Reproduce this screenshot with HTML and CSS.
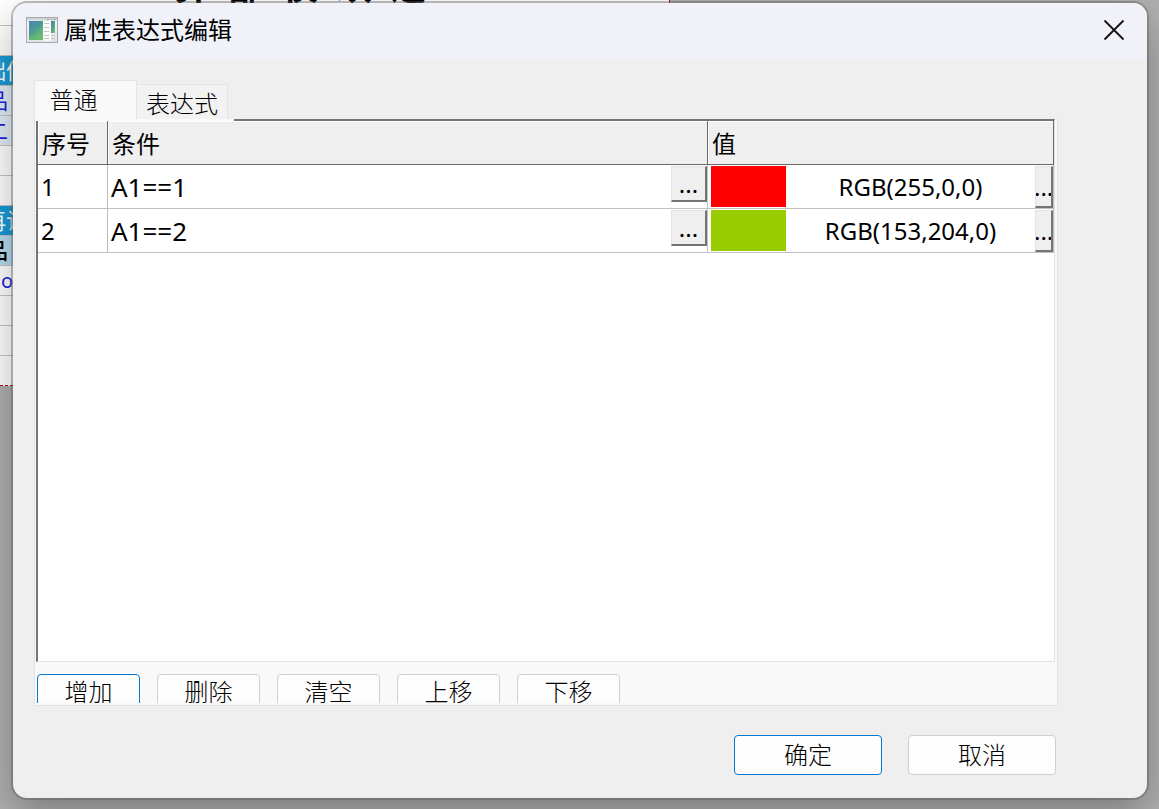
FILE: index.html
```html
<!DOCTYPE html>
<html lang="zh-CN">
<head>
<meta charset="utf-8">
<title>属性表达式编辑</title>
<link rel="stylesheet" href="styles.css">
</head>
<body>
<div class="sheet" aria-hidden="true">
  <div class="sheet-title"><span>算</span><span>部</span><span>仅</span><span>欢</span><span>之</span></div>
  <div class="sheet-row first"></div>
  <div class="sheet-row"></div>
  <div class="sheet-row band">础信</div>
  <div class="sheet-row tint">品</div>
  <div class="sheet-row tint">二</div>
  <div class="sheet-row"></div>
  <div class="sheet-row"></div>
  <div class="sheet-row band">再认</div>
  <div class="sheet-row head">品</div>
  <div class="sheet-row link">o</div>
  <div class="sheet-row"></div>
  <div class="sheet-row"></div>
  <div class="sheet-row last"></div>
</div>

<main class="dialog" role="dialog" aria-labelledby="dialog-title">
  <header class="titlebar">
    <svg class="app-icon" width="32" height="26" viewBox="0 0 32 26" aria-hidden="true">
      <defs>
        <linearGradient id="pane" x1="0" y1="0" x2="0.6" y2="1">
          <stop offset="0" stop-color="#4a82b4"/>
          <stop offset="0.5" stop-color="#4b9a92"/>
          <stop offset="1" stop-color="#6cbc6c"/>
        </linearGradient>
        <linearGradient id="frame" x1="0" y1="0" x2="0" y2="1">
          <stop offset="0" stop-color="#c3c7ca"/>
          <stop offset="0.2" stop-color="#f4f5f6"/>
          <stop offset="1" stop-color="#dfe1e3"/>
        </linearGradient>
      </defs>
      <rect x="0.5" y="0.5" width="31" height="25" fill="url(#frame)" stroke="#a7abae"/>
      <path d="M21 2.500h2M25 2.500h2M28 2.500h2" stroke="#a4aaad"/>
      <rect x="3" y="4" width="14" height="19" fill="url(#pane)"/>
      <path d="M3 19Q12 18 17 8V23H3Z" fill="#6dbb74" opacity="0.45"/>
      <rect x="17" y="4" width="8" height="20" fill="#fafafa"/>
      <path d="M18 6.500h5M18 10.500h5M18 14.500h5M18 18.500h5M18 21.500h5M25 18.500h4M25 21.500h4" stroke="#c2c5c7"/>
      <rect x="25" y="4" width="4" height="12" fill="url(#pane)"/>
    </svg>
    <h1 class="title" id="dialog-title">属性表达式编辑</h1>
    <button class="close" type="button" aria-label="关闭">
      <svg width="22" height="22" viewBox="0 0 22 22"><path d="M1.500 1.500L20.500 20.500M20.500 1.500L1.500 20.500" stroke="#111" stroke-width="1.800" fill="none"/></svg>
    </button>
  </header>

  <div class="content">
    <div class="tabs" role="tablist">
      <button class="tab active" type="button" role="tab" aria-selected="true">普通</button>
      <button class="tab" type="button" role="tab" aria-selected="false">表达式</button>
    </div>
    <section class="panel" role="tabpanel">
      <div class="grid-frame">
        <table class="grid">
          <colgroup><col class="col-no"><col><col class="col-value"></colgroup>
          <thead>
            <tr><th scope="col">序号</th><th scope="col">条件</th><th scope="col">值</th></tr>
          </thead>
          <tbody>
            <tr>
              <td>1</td>
              <td><div class="condition"><span class="expression">A1==1</span><button class="more" type="button" aria-label="编辑条件 1">...</button></div></td>
              <td><div class="value"><span class="swatch red"></span><span class="rgb">RGB(255,0,0)</span><button class="more slim" type="button" aria-label="选择颜色 1">...</button></div></td>
            </tr>
            <tr>
              <td>2</td>
              <td><div class="condition"><span class="expression">A1==2</span><button class="more" type="button" aria-label="编辑条件 2">...</button></div></td>
              <td><div class="value"><span class="swatch green"></span><span class="rgb">RGB(153,204,0)</span><button class="more slim" type="button" aria-label="选择颜色 2">...</button></div></td>
            </tr>
          </tbody>
        </table>
      </div>
      <div class="actions">
        <button class="button small primary" type="button">增加</button>
        <button class="button small" type="button">删除</button>
        <button class="button small" type="button">清空</button>
        <button class="button small" type="button">上移</button>
        <button class="button small" type="button">下移</button>
      </div>
    </section>
    <footer class="footer">
      <button class="button large primary" type="button">确定</button>
      <button class="button large" type="button">取消</button>
    </footer>
  </div>
</main>
</body>
</html>
```

FILE: styles.css
```css
* {
  box-sizing: border-box;
}

body {
  margin: 0;
  height: 100vh;
  display: flex;
  padding: 3px 12px 11px 13px;
  overflow: hidden;
  background: #b0b0b0;
  color: #000;
  font-family: "Noto Sans", "Noto Sans CJK SC", sans-serif;
  font-size: 24px;
}

button {
  margin: 0;
  padding: 0;
  font: inherit;
  color: inherit;
}

/* Worksheet behind the dialog */
.sheet {
  position: absolute;
  left: 0;
  top: 0;
  width: 670px;
  overflow: hidden;
  background: #fff;
  border-right: 1px solid #d00000;
}

.sheet-title {
  position: absolute;
  left: 174px;
  top: -33px;
  display: flex;
  gap: 18px;
  font-size: 36px;
  line-height: 40px;
  font-weight: 700;
  white-space: nowrap;
}

.sheet-row {
  height: 30px;
  border-bottom: 1px solid #c4c4c4;
  font-size: 22px;
  line-height: 29px;
  text-indent: -14px;
  white-space: nowrap;
}

.sheet-row.first {
  height: 26px;
}

.sheet-row.band {
  background: #189bd6;
  color: #fff;
  text-indent: -16px;
}

.sheet-row.tint {
  background: #e0ecf6;
  color: #2020e0;
}

.sheet-row.head {
  background: #b8dcee;
  font-weight: 500;
}

.sheet-row.link {
  color: #2020e0;
  font-size: 20px;
  text-indent: 1px;
}

.sheet-row.last {
  border-bottom: 1px dashed #d00000;
}

/* Dialog window */
.dialog {
  position: relative;
  flex: 1;
  display: flex;
  flex-direction: column;
  min-width: 0;
  overflow: hidden;
  border-radius: 14px;
  background: #efefef;
  box-shadow: 0 0 0 2px rgba(90, 90, 90, 0.4), 0 16px 40px rgba(0, 0, 0, 0.3);
}

.titlebar {
  display: flex;
  align-items: center;
  height: 56px;
  padding: 0 22px 2px 13px;
  background: #f1f2f9;
}

.title {
  flex: 1;
  margin: 0 0 0 6px;
  font-size: 24px;
  font-weight: 400;
  line-height: 32px;
}

.close {
  display: flex;
  border: 0;
  background: none;
}

.content {
  flex: 1;
  display: flex;
  flex-direction: column;
  min-height: 0;
  padding: 21px 89px 23px 21px;
}

.tabs {
  display: flex;
  align-items: flex-end;
  height: 39px;
  font-weight: 300;
}

.tab {
  height: 35px;
  width: 91px;
  padding-bottom: 2px;
  border: 1px solid #e4e4e4;
  border-left: 0;
  border-bottom: 0;
  background: #f2f2f2;
}

.tab.active {
  height: 39px;
  width: 103px;
  padding: 0 24px 6px 0;
  border-left: 1px solid #e4e4e4;
  background: #f9f9f9;
}

.panel {
  flex: 1;
  display: flex;
  flex-direction: column;
  min-height: 0;
  padding: 0 2px 2px 1px;
  border: solid #e2e2e2;
  border-width: 0 1px 1px;
  background: #f9f9f9;
}

.grid-frame {
  position: relative;
  flex: 1;
  min-height: 0;
  border: 2px solid #696969;
  border-top-color: #747474;
  border-left-color: #747474;
  border-right: 1px solid #e3e3e3;
  border-bottom: 1px solid #e3e3e3;
  background: #fff;
}

/* Tab page edge lying over the start of the grid frame */
.grid-frame::before {
  content: "";
  position: absolute;
  left: -2px;
  top: -2px;
  width: 198px;
  height: 2px;
  background: #f9f9f9;
}

.grid {
  width: 100%;
  border-collapse: separate;
  border-spacing: 0;
  table-layout: fixed;
}

.col-no {
  width: 70px;
}

.col-value {
  width: 346px;
}

.grid th {
  height: 44px;
  padding: 2px 4px 0;
  border-right: 1px solid #696969;
  border-bottom: 1px solid #696969;
  background: #efefef;
  box-shadow: inset 1px 1px #fff;
  font-weight: 400;
  line-height: 32px;
  text-align: left;
}

.grid td {
  height: 44px;
  padding: 0 0 0 3px;
  border-right: 1px solid #c0c0c0;
  border-bottom: 1px solid #c0c0c0;
  line-height: 32px;
}

.condition,
.value {
  display: flex;
  align-items: center;
  height: 43px;
}

.condition {
  justify-content: space-between;
}

.expression {
  font-size: 26px;
}

.more {
  align-self: flex-start;
  width: 36px;
  height: 36px;
  margin-top: 1px;
  border: solid;
  border-width: 1px 2px 2px 1px;
  border-color: #e3e3e3 #747474 #747474 #e3e3e3;
  background: #efefef;
  line-height: 32px;
}

.more.slim {
  width: 18px;
  height: 42px;
  overflow: hidden;
  text-indent: -2px;
}

.swatch {
  width: 75px;
  height: 41px;
}

.swatch.red {
  background: #f00;
}

.swatch.green {
  background: #9c0;
}

.rgb {
  flex: 1;
  text-align: center;
}

.actions {
  display: flex;
  gap: 17px;
  height: 41px;
  padding: 12px 0 0 1px;
  overflow: hidden;
}

.button {
  flex: none;
  border: 1px solid #d0d0d0;
  border-radius: 4px;
  background: #fdfdfd;
  font-weight: 300;
  line-height: 32px;
}

.button.primary {
  border-color: #0078d4;
}

.button.small {
  width: 103px;
  height: 39px;
  padding-bottom: 4px;
}

.button.large {
  width: 148px;
  height: 40px;
}

.footer {
  display: flex;
  justify-content: flex-end;
  gap: 26px;
  padding: 29px 2px 0 0;
}
```
